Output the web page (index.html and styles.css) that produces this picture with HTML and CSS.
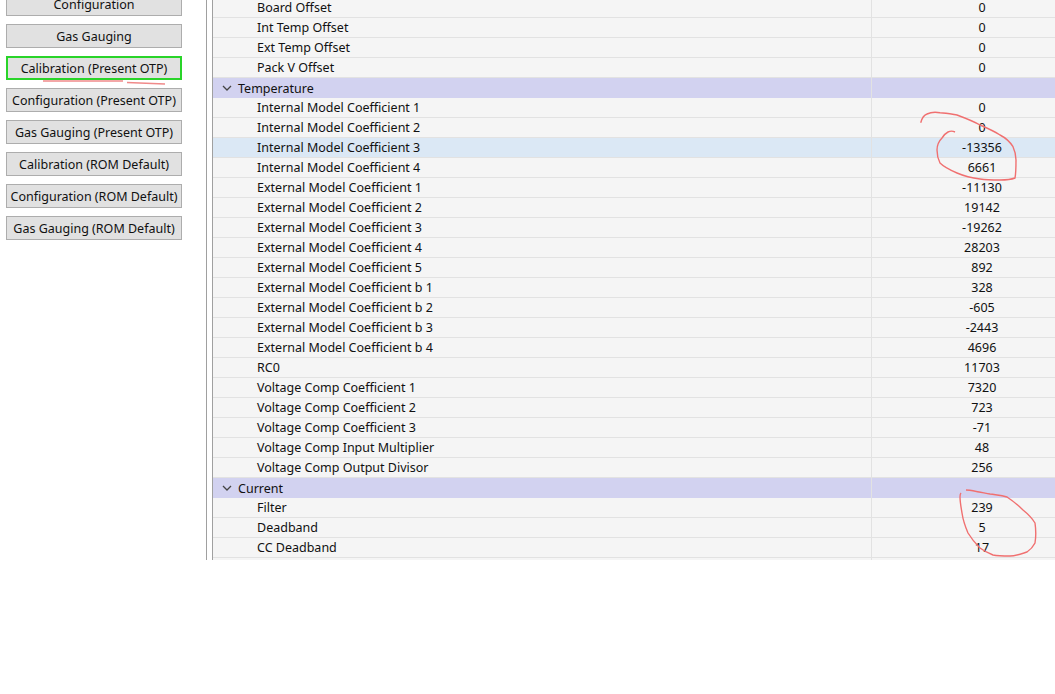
FILE: index.html
```html
<!DOCTYPE html>
<html>
<head>
<meta charset="utf-8">
<link rel="stylesheet" href="styles.css">
</head>
<body>
<div class="app">
  <div class="side">
    <div class="btns">
      <div class="btn">Configuration</div>
      <div class="btn">Gas Gauging</div>
      <div class="btn active">Calibration (Present OTP)</div>
      <div class="btn">Configuration (Present OTP)</div>
      <div class="btn">Gas Gauging (Present OTP)</div>
      <div class="btn">Calibration (ROM Default)</div>
      <div class="btn">Configuration (ROM Default)</div>
      <div class="btn">Gas Gauging (ROM Default)</div>
    </div>
  </div>
  <div class="gap"></div>
  <div class="grid">
    <div class="rows">
      <div class="row"><div class="name">Board Offset</div><div class="val">0</div></div>
      <div class="row"><div class="name">Int Temp Offset</div><div class="val">0</div></div>
      <div class="row"><div class="name">Ext Temp Offset</div><div class="val">0</div></div>
      <div class="row"><div class="name">Pack V Offset</div><div class="val">0</div></div>
      <div class="row group"><div class="name"><svg class="chev" width="10" height="6" viewBox="0 0 10 6"><path d="M1 1 L5 5 L9 1" fill="none" stroke="#444" stroke-width="1.3"/></svg>Temperature</div><div class="val"></div></div>
      <div class="row"><div class="name">Internal Model Coefficient 1</div><div class="val">0</div></div>
      <div class="row"><div class="name">Internal Model Coefficient 2</div><div class="val">0</div></div>
      <div class="row sel"><div class="name">Internal Model Coefficient 3</div><div class="val">-13356</div></div>
      <div class="row"><div class="name">Internal Model Coefficient 4</div><div class="val">6661</div></div>
      <div class="row"><div class="name">External Model Coefficient 1</div><div class="val">-11130</div></div>
      <div class="row"><div class="name">External Model Coefficient 2</div><div class="val">19142</div></div>
      <div class="row"><div class="name">External Model Coefficient 3</div><div class="val">-19262</div></div>
      <div class="row"><div class="name">External Model Coefficient 4</div><div class="val">28203</div></div>
      <div class="row"><div class="name">External Model Coefficient 5</div><div class="val">892</div></div>
      <div class="row"><div class="name">External Model Coefficient b 1</div><div class="val">328</div></div>
      <div class="row"><div class="name">External Model Coefficient b 2</div><div class="val">-605</div></div>
      <div class="row"><div class="name">External Model Coefficient b 3</div><div class="val">-2443</div></div>
      <div class="row"><div class="name">External Model Coefficient b 4</div><div class="val">4696</div></div>
      <div class="row"><div class="name">RC0</div><div class="val">11703</div></div>
      <div class="row"><div class="name">Voltage Comp Coefficient 1</div><div class="val">7320</div></div>
      <div class="row"><div class="name">Voltage Comp Coefficient 2</div><div class="val">723</div></div>
      <div class="row"><div class="name">Voltage Comp Coefficient 3</div><div class="val">-71</div></div>
      <div class="row"><div class="name">Voltage Comp Input Multiplier</div><div class="val">48</div></div>
      <div class="row"><div class="name">Voltage Comp Output Divisor</div><div class="val">256</div></div>
      <div class="row group"><div class="name"><svg class="chev" width="10" height="6" viewBox="0 0 10 6"><path d="M1 1 L5 5 L9 1" fill="none" stroke="#444" stroke-width="1.3"/></svg>Current</div><div class="val"></div></div>
      <div class="row"><div class="name">Filter</div><div class="val">239</div></div>
      <div class="row"><div class="name">Deadband</div><div class="val">5</div></div>
      <div class="row"><div class="name">CC Deadband</div><div class="val">17</div></div>
      <div class="row stub"><div class="name"></div><div class="val"></div></div>
    </div>
  </div>
</div>
<svg class="ink" width="1055" height="694" viewBox="0 0 1055 694">
  <path d="M43 81 L123 81 M127 82.5 L165 84" fill="none" stroke="#f08a8a" stroke-width="1.4"/>
  <path d="M920.7 122.7 C922 118 924 115 927 114 C931 112 936 112 940 112.7 C946 113 951 114 957 115 C965 118 973 121 980 125 C987 128 994 131 1000 135 C1006 138 1010 142 1013 146.7 C1015 151 1016 155 1016 160 C1016 167 1016 173 1015 178 C1010 180 1005 180 1000 180 C993 180 987 180 980 179 C972 178 964 176 957 173 C950 170 944 167 940 163 C938 159 937 155 937 150 C937 146 939 141 942 138 C944 135 946 133 948 132 C950 131 953 131 955 132" fill="none" stroke="#f07070" stroke-width="1.4"/>
  <path d="M966 490 C968 490 970 490 973 490.7 C979 492 985 493 990 494 C996 495 1001 495 1007 497 C1013 501 1018 505 1023 510 C1028 514 1032 518 1035 523 C1036 530 1036 537 1035 543 C1033 547 1030 550 1027 552 C1021 554 1016 556 1010 556 C1004 556 998 556 993 555 C988 553 984 551 980 548 C975 543 971 538 968 533 C965 526 963 520 962 513 C961 507 960 502 960 497 C960 495 960 494 961 493" fill="none" stroke="#f07070" stroke-width="1.4"/>
</svg>
</body>
</html>
```
FILE: styles.css
```css
html, body {
  margin: 0;
  padding: 0;
  background: #ffffff;
  overflow: hidden;
  width: 1055px;
  height: 694px;
}
body {
  font-family: "Noto Sans", "Open Sans", sans-serif;
  font-size: 12.5px;
  color: #111;
  position: relative;
}
.app {
  display: flex;
  height: 560px;
  overflow: hidden;
}
.side {
  width: 206px;
  flex: none;
  border-right: 1px solid #a0a0a0;
  overflow: hidden;
}
.btns {
  display: flex;
  flex-direction: column;
  gap: 8px;
  margin-top: -8px;
  padding-left: 6px;
}
.btn {
  width: 174px;
  height: 22px;
  border: 1px solid #adadad;
  background: #e1e1e1;
  display: flex;
  align-items: center;
  justify-content: center;
  white-space: nowrap;
}
.btn.active {
  border-color: #29d429;
  box-shadow: 0 0 0 1px #29d429 inset;
}
.gap {
  width: 5px;
  flex: none;
  border-right: 1px solid #a0a0a0;
}
.grid {
  flex: none;
  width: 900px;
  overflow: hidden;
  background: #f5f5f5;
}
.rows {
  margin-top: -2px;
}
.row {
  display: flex;
  height: 19px;
  border-bottom: 1px solid #e2e2e2;
  align-items: stretch;
}
.name {
  width: 614px;
  padding-left: 44px;
  border-right: 1px solid #e2e2e2;
  display: flex;
  align-items: center;
  white-space: nowrap;
}
.val {
  width: 220px;
  display: flex;
  align-items: center;
  justify-content: center;
}
.row.group {
  background: #d2d2f0;
  height: 20px;
  border-bottom: none;
}
.row.group .name {
  padding-left: 9px;
  width: 649px;
}
.chev {
  margin-right: 6px;
}
.row.sel {
  background: #dbe8f5;
}
.row.stub {
  border-bottom: none;
}
.ink {
  position: absolute;
  left: 0;
  top: 0;
  pointer-events: none;
}
```
